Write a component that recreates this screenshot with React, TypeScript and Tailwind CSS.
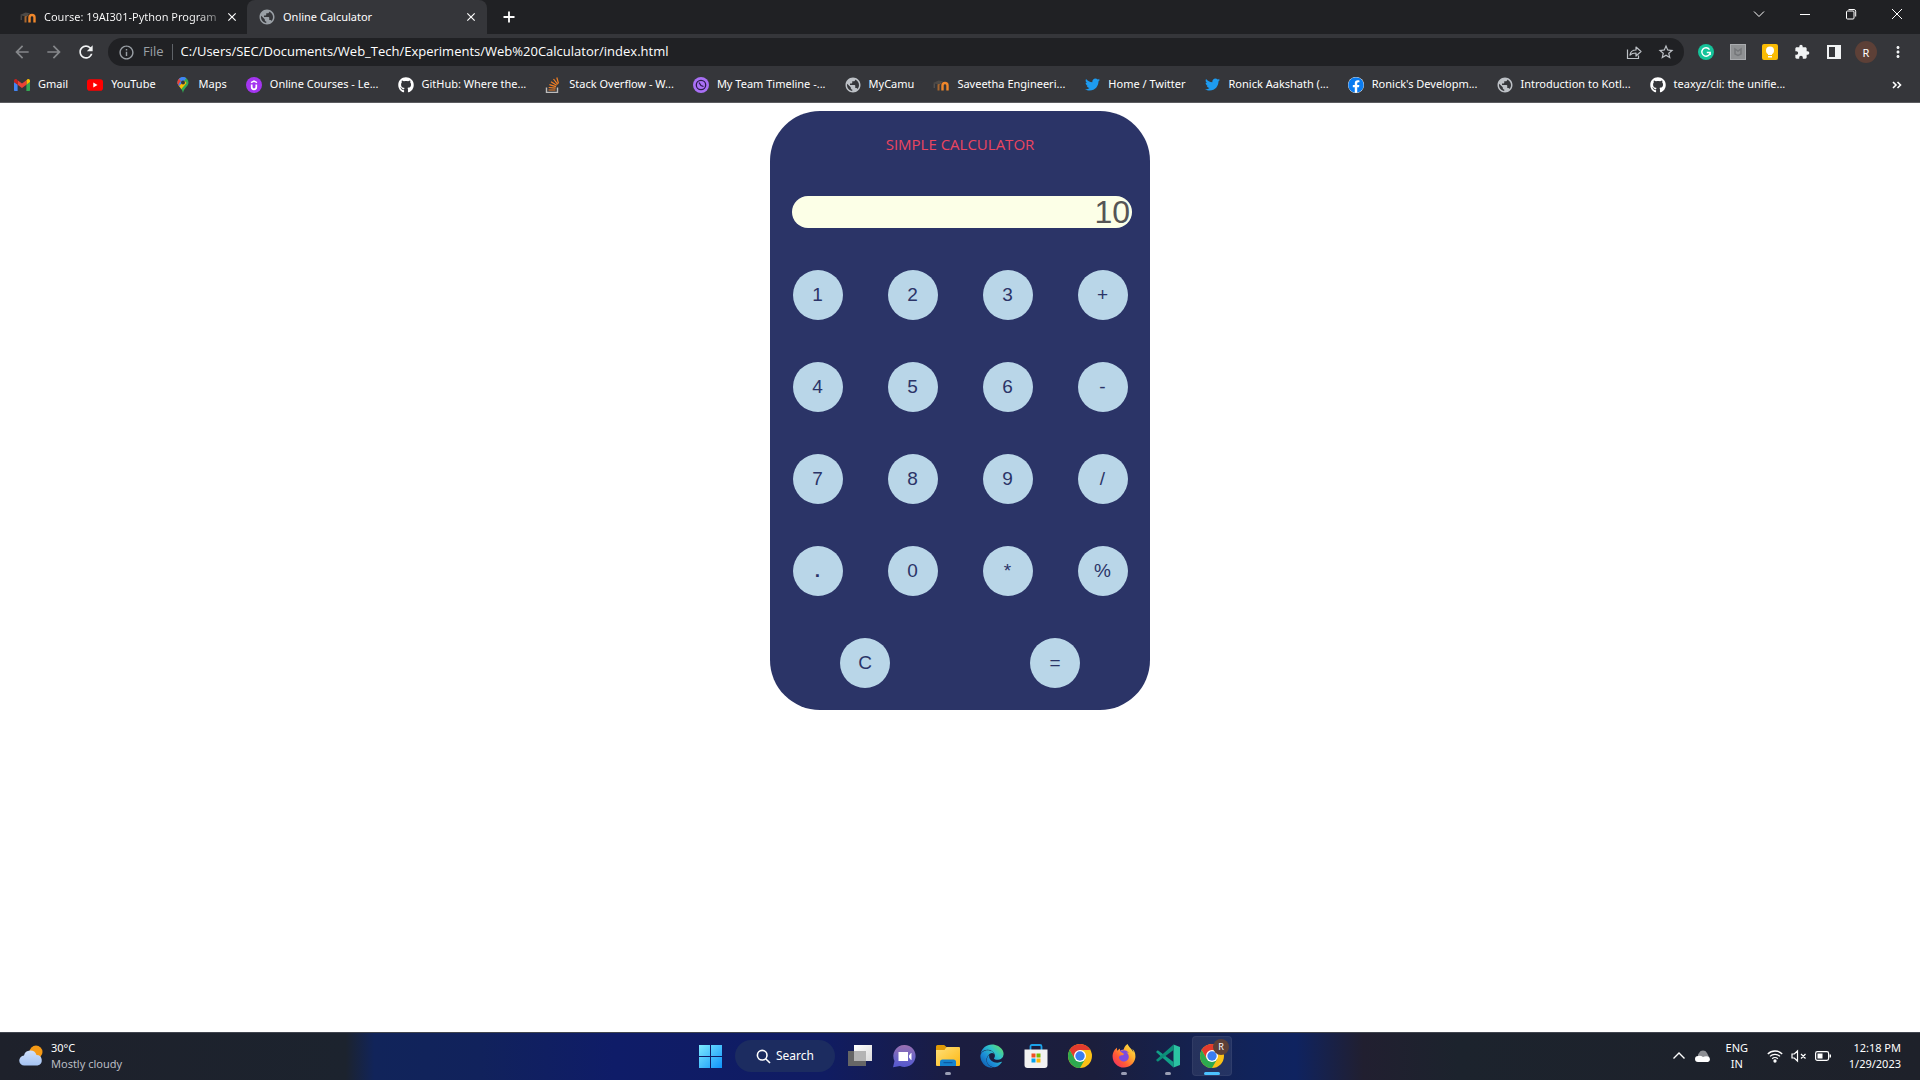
import React, { useState } from "react";
import { FaEdge, FaFacebook, FaFirefoxBrowser, FaGithub, FaTwitter } from "react-icons/fa";
import {
  MdArrowBack,
  MdArrowForward,
  MdClose,
  MdExtension,
  MdInfoOutline,
  MdMoreVert,
  MdPublic,
  MdRefresh,
  MdStarBorder,
} from "react-icons/md";

function Moodle() {
  return (
    <svg width="16" height="16" viewBox="0 0 16 16" aria-hidden="true">
      <path d="M5.500 13.500V8.500a2.400 2.400 0 0 1 2.200-2.400" fill="none" stroke="#a8672f" strokeWidth="2" />
      <path d="M9.500 13.500V8.500a2.500 2.500 0 0 1 5 0V13.500" fill="none" stroke="#f0872b" strokeWidth="2.400" />
      <path d="M0 6 5.500 3.500 10 4.300 6.500 7.200 3.200 7z" fill="#4d4a47" />
      <path d="M1.200 6.500v4.500" stroke="#6d6660" strokeWidth=".8" />
    </svg>
  );
}

function StackOverflow() {
  return (
    <svg width="16" height="16" viewBox="0 0 16 16" fill="none" aria-hidden="true">
      <path d="M1.500 10.500v5h11v-5" stroke="#bcbbbb" strokeWidth="1.400" />
      <path d="M3.500 13h7M3.700 10.500l6.900.7M4.400 7.700l6.600 1.900M6 4.700l5.700 3.500M8.500 2l4.200 5.400M11.800.500l1.700 6" stroke="#f48024" strokeWidth="1.200" />
    </svg>
  );
}

function Gmail() {
  return (
    <svg width="16" height="16" viewBox="0 0 16 16" aria-hidden="true">
      <path d="M1 14h2.600V7.600L0 5v8c0 .6.400 1 1 1z" fill="#4285f4" />
      <path d="M12.400 14H15c.6 0 1-.4 1-1V5l-3.600 2.600z" fill="#34a853" />
      <path d="M12.400 3.400v4.400L16 5V3.800c0-1.600-1.600-2.400-2.800-1.400z" fill="#fbbc04" />
      <path d="M3.600 7.800V3.200L8 6.500l4.400-3.300v4.600L8 11z" fill="#ea4335" />
      <path d="M0 3.800V5l3.600 2.800V3.200l-.8-.8C1.600 1.500 0 2.300 0 3.800z" fill="#c5221f" />
    </svg>
  );
}

function YouTube() {
  return (
    <svg width="16" height="16" viewBox="0 0 16 16" aria-hidden="true">
      <rect y="2.300" width="16" height="11.400" rx="2.800" fill="#f00" />
      <path d="M6.300 5.600v4.800L10.500 8z" fill="#fff" />
    </svg>
  );
}

function Maps() {
  return (
    <svg width="16" height="16" viewBox="0 0 16 16" aria-hidden="true">
      <defs>
        <clipPath id="pin">
          <path d="M8 0a5.500 5.500 0 0 0-5.500 5.600C2.500 9.400 6.800 10.600 8 16c1.200-5.400 5.500-6.600 5.500-10.400A5.500 5.500 0 0 0 8 0z" />
        </clipPath>
      </defs>
      <g clipPath="url(#pin)">
        <path d="M0 0h16v16H0z" fill="#34a853" />
        <path d="M0 12 13 -2H0z" fill="#1a73e8" />
        <path d="M0 0h5L8 5.500 3.500 10 0 8z" fill="#ea4335" />
        <path d="M3.500 9.800 12.500 0H6L4 1.600z" fill="#4285f4" />
        <path d="M3 10.500 9.500 3.500l2 2.500-6 7z" fill="#fbbc04" />
        <path d="M0 2l3.500-.500L6 4 3 7.500 0 7z" fill="#ea4335" />
      </g>
      <circle cx="8" cy="5.500" r="2" fill="#35363a" />
    </svg>
  );
}

function Udemy() {
  return (
    <svg width="16" height="16" viewBox="0 0 16 16" aria-hidden="true">
      <circle cx="8" cy="8" r="8" fill="#a435f0" />
      <path d="M5.700 7.500v2.600a2.300 2.300 0 0 0 4.600 0V7.500" fill="none" stroke="#fff" strokeWidth="1.700" />
      <path d="M5 5.700 8 4l3 1.700" fill="none" stroke="#fff" strokeWidth="1.500" />
    </svg>
  );
}

function Clockify() {
  return (
    <svg width="16" height="16" viewBox="0 0 16 16" aria-hidden="true">
      <circle cx="8" cy="8" r="8" fill="#a970f5" />
      <circle cx="8" cy="8" r="4.700" fill="none" stroke="#2c1a4d" strokeWidth="1.300" />
      <path d="M6 5.500 8 8.500l2.500 1" fill="none" stroke="#2c1a4d" strokeWidth="1.300" />
    </svg>
  );
}

const globe = <MdPublic size={18} className="-m-px text-[#bdc1c6]" />;

const bookmarks: { label: string; icon: React.ReactNode }[] = [
  { label: "Gmail", icon: <Gmail /> },
  { label: "YouTube", icon: <YouTube /> },
  { label: "Maps", icon: <Maps /> },
  { label: "Online Courses - Le...", icon: <Udemy /> },
  { label: "GitHub: Where the...", icon: <FaGithub size={16} className="text-white" /> },
  { label: "Stack Overflow - W...", icon: <StackOverflow /> },
  { label: "My Team Timeline -...", icon: <Clockify /> },
  { label: "MyCamu", icon: globe },
  { label: "Saveetha Engineeri...", icon: <Moodle /> },
  { label: "Home / Twitter", icon: <FaTwitter size={15} className="text-[#1d9bf0]" /> },
  { label: "Ronick Aakshath (...", icon: <FaTwitter size={15} className="text-[#1d9bf0]" /> },
  {
    label: "Ronick's Developm...",
    icon: <FaFacebook size={16} className="rounded-full bg-white text-[#0b7cf0]" />,
  },
  { label: "Introduction to Kotl...", icon: globe },
  { label: "teaxyz/cli: the unifie...", icon: <FaGithub size={16} className="text-white" /> },
];

function TabStrip() {
  return (
    <div className="flex h-[34px] bg-[#202124]">
      <div className="flex w-[247px] items-center pl-5 pr-2">
        <Moodle />
        <span className="ml-2 grow whitespace-nowrap bg-linear-to-r from-white from-85% to-white/10 bg-clip-text text-transparent">
          Course: 19AI301-Python Program
        </span>
        <button aria-label="Close tab" className="text-white">
          <MdClose size={14} />
        </button>
      </div>
      <div className="flex w-[240px] items-center rounded-t-lg bg-[#35363a] pl-[11px] pr-[9px] text-white">
        <MdPublic size={18} className="text-[#9aa0a6]" />
        <span className="ml-[7px] grow">Online Calculator</span>
        <button aria-label="Close tab">
          <MdClose size={14} />
        </button>
      </div>
      <button aria-label="New tab" className="ml-[14px] text-white">
        <svg width="16" height="16" viewBox="0 0 16 16">
          <path d="M8 2.500v11M2.500 8h11" stroke="currentColor" strokeWidth="1.800" />
        </svg>
      </button>
      <div className="ml-auto flex h-7 text-white">
        {[
          ["Search tabs", "M3 5.500 8 10.500l5-5"],
          ["Minimize", "M3 8.500h10"],
          ["Restore", "M3.500 6a1 1 0 0 1 1-1H10a1 1 0 0 1 1 1v6a1 1 0 0 1-1 1H4.500a1 1 0 0 1-1-1zM5.500 3.500H11A1.800 1.800 0 0 1 12.700 5.200V10.500"],
          ["Close", "M3 3l10 10M13 3 3 13"],
        ].map(([name, d]) => (
          <button key={name} aria-label={name} className="flex w-[46px] items-center justify-center">
            <svg width="16" height="16" viewBox="0 0 16 16" fill="none" stroke="currentColor" strokeWidth="1">
              <path d={d} />
            </svg>
          </button>
        ))}
      </div>
    </div>
  );
}

function Toolbar() {
  return (
    <div className="flex h-9 items-center bg-[#35363a] text-[#f1f3f4]">
      <div className="flex gap-3 pl-3 pr-3">
        <button aria-label="Back" className="text-[#85878a]"><MdArrowBack size={20} /></button>
        <button aria-label="Forward" className="text-[#85878a]"><MdArrowForward size={20} /></button>
        <button aria-label="Reload"><MdRefresh size={20} /></button>
      </div>
      <div className="flex h-7 grow items-center rounded-full bg-[#202124] pl-[10px] pr-[9px] font-['Open_Sans',sans-serif]">
        <MdInfoOutline size={17} className="text-[#9aa0a6]" />
        <span className="ml-2 text-[13px] text-[#9aa0a6]">File</span>
        <span className="mx-2 h-4 w-px bg-[#5f6368]" />
        <input
          aria-label="Address"
          className="min-w-0 grow bg-transparent text-[13px] text-white outline-none"
          defaultValue="C:/Users/SEC/Documents/Web_Tech/Experiments/Web%20Calculator/index.html"
        />
        <button aria-label="Share" className="text-[#bdc1c6]">
          <svg width="16" height="16" viewBox="0 0 16 16" fill="none" stroke="currentColor" strokeWidth="1.200">
            <path d="M1.500 5.500v9h11v-3" />
            <path d="M4 11c.5-3.500 2.500-5 6-5V3l5 4.500-5 4.500V9C7.500 9 5.500 9.500 4 11z" strokeLinejoin="round" />
          </svg>
        </button>
        <button aria-label="Bookmark" className="ml-[15px] text-[#bdc1c6]"><MdStarBorder size={18} /></button>
      </div>
      <div className="flex items-center gap-4 pl-[14px] pr-[14px]">
        <button aria-label="Grammarly" className="flex size-4 items-center justify-center rounded-full bg-[#15c39a]">
          <svg width="16" height="16" viewBox="0 0 16 16" fill="none" stroke="#fff" strokeWidth="1.400">
            <path d="M11.500 5.600A4.200 4.200 0 1 0 12.200 8.500H8.800M12.200 8.500V11" />
          </svg>
        </button>
        <button aria-label="Ad blocker" className="size-4 border border-[#a9abae] bg-[#8f9193]">
          <svg width="14" height="14" viewBox="0 0 14 14" fill="none" stroke="#75777a" strokeWidth="1.500">
            <path d="M4 4l3 2 3-2v5l-3 1.500L4 9z" />
          </svg>
        </button>
        <button aria-label="Keep" className="size-4 rounded-[2px] bg-[#fbbc04]">
          <svg width="16" height="16" viewBox="0 0 16 16" fill="#fff">
            <circle cx="8" cy="6.500" r="4" />
            <path d="M6 8h4v3H6zM6 12h4v1.500H6z" />
          </svg>
        </button>
        <button aria-label="Extensions"><MdExtension size={16} /></button>
        <button aria-label="Side panel">
          <svg width="16" height="16" viewBox="0 0 16 16">
            <path d="M1 1h14v14H1zM3 3v10h6V3z" fill="currentColor" fillRule="evenodd" />
          </svg>
        </button>
        <button aria-label="Profile" className="-mx-[3px] size-[22px] rounded-full bg-[#5d4037] text-[11px] leading-none text-white">R</button>
        <button aria-label="Menu"><MdMoreVert size={18} className="-mx-px" /></button>
      </div>
    </div>
  );
}

function BookmarksBar() {
  return (
    <nav className="flex h-[33px] items-center border-b border-[#5b5c60] bg-[#35363a] pb-[3px] pl-[14px] pr-4 text-white">
      <div className="flex grow gap-[19px]">
        {bookmarks.map((b) => (
          <a key={b.label} href="#" className="flex items-center gap-2 whitespace-nowrap">
            <span className="flex size-4 items-center justify-center">{b.icon}</span>
            {b.label}
          </a>
        ))}
      </div>
      <button aria-label="More bookmarks">
        <svg width="14" height="14" viewBox="0 0 14 14" fill="none" stroke="currentColor" strokeWidth="1.600">
          <path d="M3 4l3 3-3 3M7.500 4l3 3-3 3" />
        </svg>
      </button>
    </nav>
  );
}

const keys = ["1", "2", "3", "+", "4", "5", "6", "-", "7", "8", "9", "/", ".", "0", "*", "%"];

function Key({ label, onPress }: { label: string; onPress: () => void }) {
  return (
    <button
      onClick={onPress}
      className={
        label === "."
          ? "size-[50px] rounded-full bg-[#b9d6e8] text-[19px] font-bold text-[#2b3467]"
          : "size-[50px] rounded-full bg-[#b9d6e8] text-[19px] text-[#2b3467]"
      }
    >
      {label}
    </button>
  );
}

function Calculator() {
  const [value, setValue] = useState("10");
  const add = (k: string) => setValue(value + k);
  return (
    <section className="mx-auto w-[380px] rounded-[50px] bg-[#2b3467] pb-[22px] pt-[21px] font-['Liberation_Sans',Arial,sans-serif]">
      <h1 className="text-center font-['Open_Sans','Noto_Sans',sans-serif] text-[15px] leading-6 text-[#eb455f]">
        SIMPLE CALCULATOR
      </h1>
      <div className="mt-10 pl-[22px] pr-[18px]">
        <input
          aria-label="Result"
          value={value}
          onChange={(e) => setValue(e.target.value)}
          className="block h-8 w-full rounded-2xl bg-[#fcffe7] px-[2px] text-right text-[32px] leading-8 text-[#555] outline-none"
        />
      </div>
      <div className="mt-[42px] grid grid-cols-4 justify-items-center gap-y-[42px]">
        {keys.map((k) => (
          <Key key={k} label={k} onPress={() => add(k)} />
        ))}
      </div>
      <div className="mt-[42px] grid grid-cols-2 justify-items-center">
        <Key label="C" onPress={() => setValue("")} />
        <Key label="=" onPress={() => setValue(value)} />
      </div>
    </section>
  );
}

function Chrome() {
  return (
    <svg width="24" height="24" viewBox="0 0 24 24" aria-hidden="true">
      <circle cx="12" cy="12" r="12" fill="#fbc116" />
      <path d="M1.610 6A12 12 0 0 1 22.390 6H12l-5.200 9z" fill="#e33b2e" />
      <path d="M1.610 6A12 12 0 0 0 12 24l5.200-9H6.800z" fill="#2da94f" />
      <circle cx="12" cy="12" r="6" fill="#fff" />
      <circle cx="12" cy="12" r="4.700" fill="#3a7df0" />
    </svg>
  );
}

function TaskApp({
  name,
  running,
  active,
  children,
}: {
  name: string;
  running?: boolean;
  active?: boolean;
  children: React.ReactNode;
}) {
  return (
    <button
      aria-label={name}
      className={
        active
          ? "relative flex size-10 items-center justify-center rounded border border-white/5 bg-white/8"
          : "relative flex size-10 items-center justify-center"
      }
    >
      {children}
      {running && <span className="absolute bottom-px h-[3px] w-[6px] rounded-full bg-[#9a9eb4]" />}
      {active && <span className="absolute bottom-0 h-[3px] w-4 rounded-full bg-[#4cc2ff]" />}
    </button>
  );
}

function TaskbarApps() {
  return (
    <div className="flex items-center gap-1 pl-0.5">
      <TaskApp name="Start">
        <svg width="23" height="23" viewBox="0 0 23 23">
          <defs>
            <linearGradient id="win" x1="0" y1="0" x2="23" y2="23" gradientUnits="userSpaceOnUse">
              <stop stopColor="#7deaff" />
              <stop offset="1" stopColor="#0f93fa" />
            </linearGradient>
          </defs>
          <path d="M0 0h11v11H0zM12 0h11v11H12zM0 12h11v11H0zM12 12h11v11H12z" fill="url(#win)" />
        </svg>
      </TaskApp>
      <button className="mx-px flex h-8 w-[100px] items-center justify-center gap-[5px] rounded-full bg-[#1c2c60] text-xs text-white">
        <svg width="15" height="15" viewBox="0 0 15 15" fill="none" stroke="currentColor" strokeWidth="1.600">
          <circle cx="6.200" cy="6.200" r="4.800" />
          <path d="M9.700 9.700 14 14" />
        </svg>
        <span>Search</span>
      </button>
      <TaskApp name="Task view">
        <svg width="24" height="24" viewBox="0 0 24 24">
          <defs>
            <linearGradient id="tv" x1="0" y1="0" x2="1" y2="1">
              <stop stopColor="#fff" />
              <stop offset="1" stopColor="#dadada" />
            </linearGradient>
          </defs>
          <path d="M0 7h18v15H0z" fill="#666" />
          <path d="M6 1h18v16H6z" fill="url(#tv)" />
          <path d="M6 7h12v10H6z" fill="#b4b4b4" />
        </svg>
      </TaskApp>
      <TaskApp name="Chat">
        <svg width="24" height="24" viewBox="0 0 24 24">
          <defs>
            <linearGradient id="chat" x1="0" y1="0" x2="0" y2="1">
              <stop stopColor="#9a6fb0" />
              <stop offset=".5" stopColor="#7067c4" />
              <stop offset="1" stopColor="#5558cf" />
            </linearGradient>
          </defs>
          <path d="M12.500 1a11 11 0 1 1-4.500 21L1 23.200 2.500 17A11 11 0 0 1 12.500 1z" fill="url(#chat)" />
          <path d="M6.500 8h9.500v9H6.500zM17 11.500 19 9h.500v7H19l-2-2.500z" fill="#fff" />
        </svg>
      </TaskApp>
      <TaskApp name="File Explorer" running>
        <svg width="24" height="24" viewBox="0 0 24 24">
          <defs>
            <linearGradient id="fold" x1="0" y1="0" x2="1" y2="1">
              <stop stopColor="#ffe07a" />
              <stop offset="1" stopColor="#fdb813" />
            </linearGradient>
          </defs>
          <path d="M0 2.500Q0 1 1.500 1h6.700L10.500 3V10H0z" fill="#e09a06" />
          <path d="M0 6h8.500l2-3H23q1 0 1 1v17q0 1-1 1H1q-1 0-1-1z" fill="url(#fold)" />
          <path d="M4 22v-4q0-2.500 2.500-2.500h11Q20 15.500 20 18v4z" fill="#1583cf" />
          <path d="M7.500 18h9v1.200h-9z" fill="#0c5ba3" />
        </svg>
      </TaskApp>
      <TaskApp name="Edge">
        <svg width="0" height="0" className="absolute">
          <defs>
            <linearGradient id="edge" x1="1" y1="0" x2="0" y2="1">
              <stop stopColor="#6fe24f" />
              <stop offset=".35" stopColor="#30c3c8" />
              <stop offset=".65" stopColor="#1b8bd8" />
              <stop offset="1" stopColor="#0c4f9e" />
            </linearGradient>
            <linearGradient id="fox" x1="1" y1="0" x2="0" y2="1">
              <stop stopColor="#fff44f" />
              <stop offset=".35" stopColor="#ffb02e" />
              <stop offset=".65" stopColor="#ff5a36" />
              <stop offset="1" stopColor="#f0246e" />
            </linearGradient>
          </defs>
        </svg>
        <FaEdge size={24} fill="url(#edge)" />
      </TaskApp>
      <TaskApp name="Microsoft Store">
        <svg width="24" height="24" viewBox="0 0 24 24">
          <path d="M6.500 6V2.500Q6.500 1 8 1h8q1.500 0 1.500 1.500V6" fill="none" stroke="#1ba1e8" strokeWidth="1.800" />
          <path d="M.500 5.500h23V21q0 3-3 3h-17q-3 0-3-3z" fill="#f2f2f2" />
          <path d="M7.500 9.500h4v4h-4z" fill="#f04f23" />
          <path d="M12.500 9.500h4v4h-4z" fill="#7db900" />
          <path d="M7.500 14.500h4v4h-4z" fill="#03a3ee" />
          <path d="M12.500 14.500h4v4h-4z" fill="#fdb70a" />
        </svg>
      </TaskApp>
      <TaskApp name="Chrome"><Chrome /></TaskApp>
      <TaskApp name="Firefox" running>
        <svg width="24" height="24" viewBox="0 0 24 24">
          <circle cx="11.500" cy="12.500" r="7" fill="#7b4be0" />
          <FaFirefoxBrowser size={24} fill="url(#fox)" />
        </svg>
      </TaskApp>
      <TaskApp name="VS Code Insiders" running>
        <svg width="24" height="24" viewBox="0 0 24 24">
          <path d="M17.500.500 24 3v18l-6.500 2.500z" fill="#2bc3a2" />
          <path d="M1.800 6.300 17.500 18v5.500L0 8z" fill="#12a088" />
          <path d="M1.800 17.700 17.500 6V.500L0 16z" fill="#0c8f79" />
        </svg>
      </TaskApp>
      <TaskApp name="Chrome, profile R" active>
        <Chrome />
        <span className="absolute right-[2px] top-[2px] flex size-4 items-center justify-center rounded-full bg-[#5d4037] text-[9px] text-white">
          R
        </span>
      </TaskApp>
    </div>
  );
}

function Taskbar() {
  return (
    <footer className="grid h-12 grid-cols-[1fr_auto_1fr] border-t border-[#41454f] bg-[linear-gradient(90deg,#1e212b_0%,#1c232e_18%,#11245a_19.500%,#11225c_25%,#0f1c68_32%,#101c62_43%,#1b1d40_50%,#1b1e3c_57%,#11235a_65%,#0f2360_67.500%,#211f30_71%,#1c232d_76%,#1e212a_100%)] pb-px text-white">
      <div className="flex items-center gap-2 pl-[19px]">
        <svg width="24" height="24" viewBox="0 0 24 24" aria-hidden="true">
          <defs>
            <linearGradient id="cloud" x1="0" y1="0" x2="0" y2="1">
              <stop stopColor="#cfe0fb" />
              <stop offset="1" stopColor="#a5c3f2" />
            </linearGradient>
          </defs>
          <circle cx="17" cy="8" r="6.500" fill="#f59a16" />
          <path d="M5.500 21.500a5 5 0 0 1-.500-10 6.500 6.500 0 0 1 12.500-.500 5.300 5.300 0 0 1 1 10.500z" fill="url(#cloud)" />
        </svg>
        <div className="leading-4">
          <div>30°C</div>
          <div className="text-[#b9bcc2]">Mostly cloudy</div>
        </div>
      </div>
      <TaskbarApps />
      <div className="flex items-center justify-end pr-[19px]">
        <svg width="14" height="14" viewBox="0 0 14 14" fill="none" stroke="currentColor" strokeWidth="1.400">
          <path d="M1.500 9.500 7 4l5.500 5.500" />
        </svg>
        <svg width="16" height="14" viewBox="0 0 16 14" className="ml-[9px]">
          <path d="M3 8a4 4 0 0 1 1-4 4.500 4.500 0 0 1 8 0L14 8z" fill="#8d8f94" />
          <path d="M3 13a3 3 0 0 1 0-6q2.500-1 5 1 2-1 5-.500a2.900 2.900 0 0 1 0 5.500z" fill="#fff" />
        </svg>
        <div className="ml-[14px] w-6 text-center leading-4">
          <div>ENG</div>
          <div>IN</div>
        </div>
        <svg width="16" height="14" viewBox="0 0 16 14" fill="none" stroke="currentColor" strokeWidth="1.300" className="ml-[18px]">
          <path d="M.800 5a10.200 10.200 0 0 1 14.400 0M3 7.400a7 7 0 0 1 10 0M5.200 9.700a4 4 0 0 1 5.600 0" />
          <circle cx="8" cy="12" r="1" fill="currentColor" />
        </svg>
        <svg width="16" height="14" viewBox="0 0 16 14" fill="none" stroke="currentColor" strokeWidth="1.200" className="ml-2">
          <path d="M1 5h2.300L6.500 2v10L3.300 9H1zM10 5l4.500 4.500M14.500 5 10 9.500" />
        </svg>
        <svg width="16" height="14" viewBox="0 0 16 14" className="ml-2">
          <rect x=".600" y="2.600" width="13" height="8.800" rx="1.800" fill="none" stroke="currentColor" strokeWidth="1.200" />
          <path d="M2.500 4.500h5v5h-5zM14.500 5.500h1.500v3h-1.500z" fill="currentColor" />
        </svg>
        <div className="ml-[18px] text-right leading-4">
          <div>12:18 PM</div>
          <div>1/29/2023</div>
        </div>
      </div>
    </footer>
  );
}

export default function App() {
  return (
    <div className="flex min-h-screen flex-col bg-white font-['Noto_Sans','Open_Sans',sans-serif] text-[11px]">
      <header>
        <TabStrip />
        <Toolbar />
        <BookmarksBar />
      </header>
      <main className="grow pt-2">
        <Calculator />
      </main>
      <Taskbar />
    </div>
  );
}
